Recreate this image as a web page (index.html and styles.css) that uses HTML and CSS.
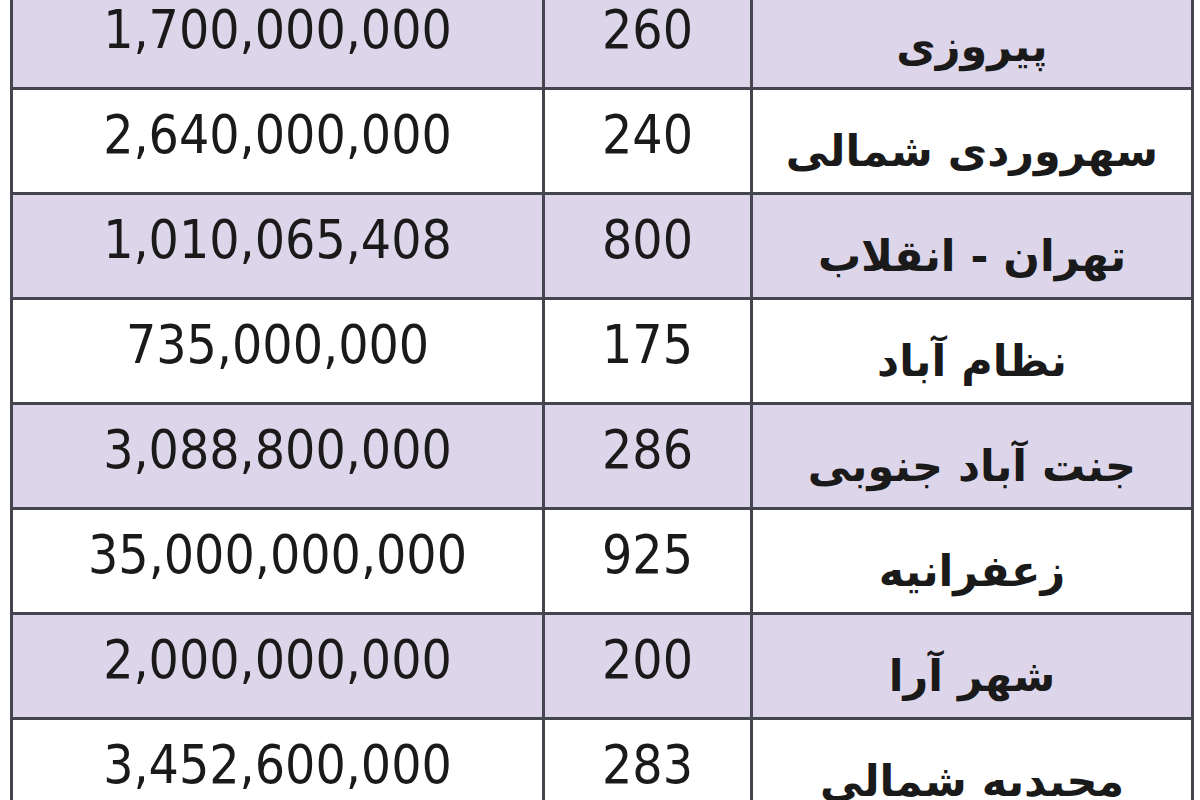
FILE: index.html
```html
<!DOCTYPE html>
<html lang="fa">
<head>
<meta charset="utf-8">
<title>قیمت آپارتمان</title>
<link rel="stylesheet" href="styles.css">
</head>
<body>
<div class="sheet">
  <table class="prices">
    <colgroup>
      <col class="c-price">
      <col class="c-area">
      <col class="c-name">
    </colgroup>
    <tbody>
      <tr class="alt"><td class="num">1,700,000,000</td><td class="num">260</td><td class="name" dir="rtl">پیروزی</td></tr>
      <tr><td class="num">2,640,000,000</td><td class="num">240</td><td class="name" dir="rtl">سهروردی شمالی</td></tr>
      <tr class="alt"><td class="num">1,010,065,408</td><td class="num">800</td><td class="name" dir="rtl">تهران - انقلاب</td></tr>
      <tr><td class="num">735,000,000</td><td class="num">175</td><td class="name" dir="rtl">نظام آباد</td></tr>
      <tr class="alt"><td class="num">3,088,800,000</td><td class="num">286</td><td class="name" dir="rtl">جنت آباد جنوبی</td></tr>
      <tr><td class="num">35,000,000,000</td><td class="num">925</td><td class="name" dir="rtl">زعفرانیه</td></tr>
      <tr class="alt"><td class="num">2,000,000,000</td><td class="num">200</td><td class="name" dir="rtl">شهر آرا</td></tr>
      <tr><td class="num">3,452,600,000</td><td class="num">283</td><td class="name" dir="rtl">مجیدیه شمالی</td></tr>
    </tbody>
  </table>
</div>
</body>
</html>
```
FILE: styles.css
```css
html, body {
  margin: 0;
  padding: 0;
  background: #ffffff;
}

body {
  width: 1200px;
  height: 800px;
  overflow: hidden;
}

.sheet {
  padding-left: 10px;
  margin-top: -18px;
}

.prices {
  border-collapse: collapse;
  table-layout: fixed;
  width: 1181px;
  color: #1a1a1a;
}

.c-price { width: 532px; }
.c-area { width: 208px; }
.c-name { width: 441px; }

.prices td {
  border: 3px solid #45454f;
  height: 105px;
  padding: 0;
  text-align: center;
  vertical-align: middle;
  box-sizing: border-box;
}

.prices tr.alt td {
  background: #ddd6ea;
}

.num {
  font-family: "DejaVu Sans Condensed", "DejaVu Sans", sans-serif;
  font-stretch: condensed;
  font-size: 53px;
  line-height: 60px;
  padding-bottom: 13px !important;
}

.name {
  font-family: "DejaVu Sans", sans-serif;
  font-weight: bold;
  font-size: 43px;
  line-height: 60px;
  padding-top: 20px !important;
}
```
